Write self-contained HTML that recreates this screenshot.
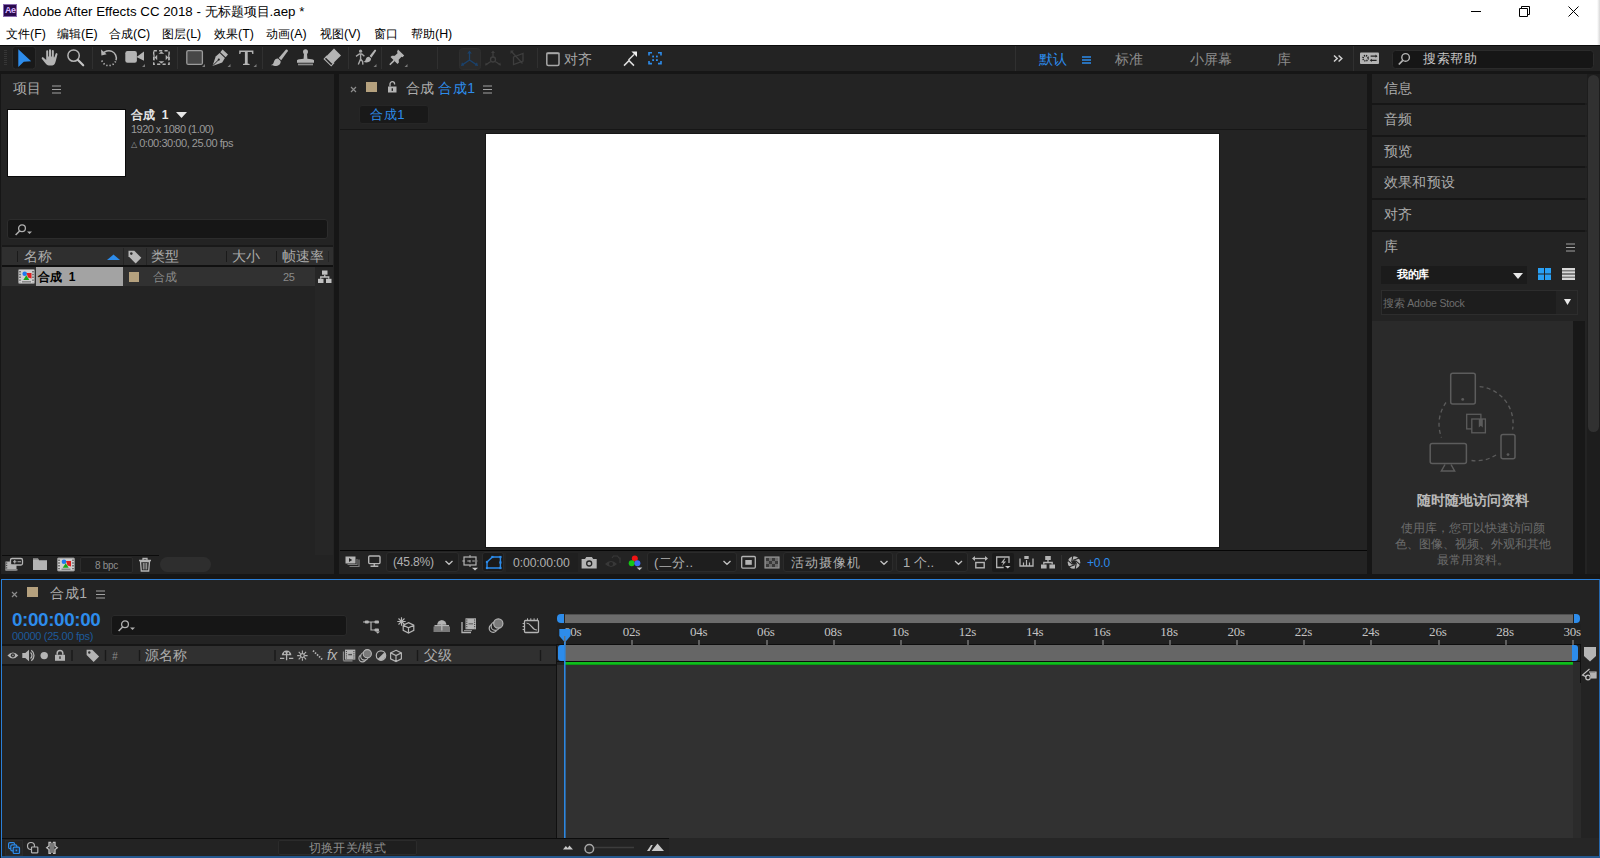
<!DOCTYPE html>
<html><head><meta charset="utf-8"><title>Adobe After Effects CC 2018</title>
<style>
*{box-sizing:border-box;margin:0;padding:0}
html,body{width:1600px;height:858px;overflow:hidden;background:#161616;font-family:"Liberation Sans",sans-serif;}
.a{position:absolute}
.t{position:absolute;white-space:nowrap;line-height:1}
svg{position:absolute;overflow:visible}
/* title + menu */
#title{left:0;top:0;width:1600px;height:45px;background:#fff}
#title .tt{left:23px;top:5px;font-size:13.3px;color:#000}
.menu{top:28px;font-size:12.400px;color:#000}
/* toolbar */
#tool{left:0;top:45px;width:1600px;height:26px;background:#232323;border-top:1px solid #0c0c0c}
.vd{position:absolute;width:1px;background:#333;top:4px;height:20px}
.pn{position:absolute;background:#232323}
.rl{top:625px;font-family:"Liberation Serif",serif;font-size:13px;color:#c4c4c4;letter-spacing:-.2px}
.bx{background:#1e1e1e;border:1px solid #2b2b2b;border-radius:3px}
.ft{font-size:12.400px;color:#b0b0b0;letter-spacing:-.2px}
.lbl{color:#acacac;font-size:14px;letter-spacing:.2px;margin-top:-1.5px}
</style></head><body>
<!-- TITLE BAR -->
<div id="title" class="a">
  <div class="a" style="left:3px;top:4px;width:14px;height:13px;background:#2a0a4e;border:1px solid #8a6bb0"></div>
  <div class="t" style="left:5px;top:6px;font-size:9px;font-weight:bold;color:#d9b8ff;letter-spacing:-0.5px">Ae</div>
  <div class="t tt">Adobe After Effects CC 2018 - 无标题项目.aep *</div>
  <div class="t menu" style="left:6px">文件(F)</div>
  <div class="t menu" style="left:57px">编辑(E)</div>
  <div class="t menu" style="left:109px">合成(C)</div>
  <div class="t menu" style="left:162px">图层(L)</div>
  <div class="t menu" style="left:214px">效果(T)</div>
  <div class="t menu" style="left:266px">动画(A)</div>
  <div class="t menu" style="left:320px">视图(V)</div>
  <div class="t menu" style="left:374px">窗口</div>
  <div class="t menu" style="left:411px">帮助(H)</div>
  <div class="a" style="left:1597px;top:0;width:3px;height:45px;background:linear-gradient(90deg,#fff,#d8d8d8)"></div>
  <svg style="left:1465px;top:0" width="135" height="22" viewBox="0 0 135 22"><path d="M6 11.5h10" stroke="#000" stroke-width="1" fill="none"/><path d="M54.5 8.5h8v8h-8zM56.5 8.5v-2h8v8h-2" stroke="#000" stroke-width="1" fill="none"/><path d="M103.5 6.5l10 10M113.5 6.5l-10 10" stroke="#000" stroke-width="1" fill="none"/></svg>
</div>
<!-- TOOLBAR -->
<div id="tool" class="a">
<svg style="left:0;top:-1px" width="1600" height="28" viewBox="0 45 1600 28" fill="none">
  <!-- grip -->
  <path d="M4 50.5h3M4 52.5h3M4 54.5h3M4 56.5h3M4 58.5h3M4 60.5h3M4 62.5h3M4 64.5h3" stroke="#363636" stroke-width="1"/>
  <!-- select tool -->
  <rect x="12.5" y="46.5" width="23" height="22.5" rx="3" fill="#191919" stroke="#2b2b2b"/>
  <path d="M18.3 49.3L31.2 61.2L23.8 61.8L18.3 67z" fill="#2d8ceb"/>
  <!-- hand -->
  <g fill="#b4b4b4"><path d="M46.2 57V51.3a1 1 0 0 1 2 0V56.5h.8V50.2a1 1 0 0 1 2 0V56.5h.8V51a1 1 0 0 1 2 0V57.3h.6l1.2-3.6a1 1 0 0 1 1.9.5l-1.6 6.3c-.5 2.4-1.6 5-3.6 5h-3.4c-1.6 0-2.6-1-3.5-2.2l-3.6-4.6a1.05 1.05 0 0 1 1.6-1.3l2.8 2.6z"/></g>
  <!-- zoom -->
  <circle cx="73.6" cy="55.6" r="5.7" stroke="#b4b4b4" stroke-width="1.5"/><path d="M78 60l5.2 5.3" stroke="#c4c4c4" stroke-width="2.2" stroke-linecap="round"/>
  <path d="M92.5 47v22M177.5 47v22M262.5 47v22M348.5 47v22M381.5 47v22M437.5 47v22M537.5 48v20M1015.5 46v25M1353.5 46v25" stroke="#303030"/>
  <!-- rotate -->
  <path d="M102.6 54.3A7.4 7.4 0 0 1 116 60.3" stroke="#b4b4b4" stroke-width="1.5"/>
  <path d="M101 49.6l.4 5.9 5.3-1.2z" fill="#b4b4b4"/>
  <path d="M115.6 61.3A7.4 7.4 0 0 1 101.6 59.5" stroke="#b4b4b4" stroke-width="1.6" stroke-dasharray="1.3 1.9"/>
  <!-- camera -->
  <rect x="125.3" y="51" width="11.6" height="11.8" rx="2.2" fill="#b4b4b4"/><path d="M136.5 57l7.5-5.6v9.3z" fill="#b4b4b4"/>
  <path d="M145 64v3h-3z M205 64v3h-3z M230.500 64v3h-3z M256.500 64v3h-3z M376.500 64v3h-3z M407.500 64v3h-3z" fill="#7a7a7a"/>
  <!-- pan behind -->
  <rect x="153.7" y="50.7" width="15.4" height="13.6" stroke="#b4b4b4" stroke-width="1.4" stroke-dasharray="3.2 2.2"/>
  <path d="M158.500 53.800h5.800l-2.900-2.200z M158.500 61.200h5.800l-2.900 2.200z M157.200 54.800v5.400l-2.600-2.700z M165.700 54.800v5.400l2.600-2.700z" fill="#b4b4b4"/>
  <path d="M154 54.500v6M168.800 54.500v6" stroke="#b4b4b4" stroke-width="1.2"/>
  <!-- rect tool -->
  <rect x="186.800" y="50.600" width="15.600" height="13.800" rx="1.500" fill="#474747" stroke="#9c9c9c" stroke-width="1.300"/>
  <!-- pen -->
  <path d="M222.600 49.600l5.400 5-2.300 2.600-5.400-5z" fill="#b4b4b4"/>
  <path d="M219.600 53l5.300 5-2.700 4.400-9.700 3.600 3.200-9.400z" fill="#b4b4b4"/>
  <path d="M212.800 65.600l5.600-5.600" stroke="#232323" stroke-width="1"/>
  <circle cx="218.800" cy="59.600" r="1.100" fill="#232323"/>
  <!-- T -->
  <path d="M239.200 50.500h14.200v3.600h-1.100l-.6-2h-4v11.400l1.900.4v1h-6.600v-1l1.900-.4V52.100h-4l-.6 2h-1.100z" fill="#b4b4b4"/>
  <!-- brush -->
  <path d="M286 49.600c1.200-.6 2.300.4 1.700 1.600l-6.500 9-2.500-2.300z" fill="#b4b4b4"/>
  <path d="M278 58.600l2.600 2.400c.5 3-2 5-5.600 5-1.800 0-3.200-.4-4-.9 2.200-.5 2.400-2 3-3.600.6-1.800 2-3 4-2.900z" fill="#b4b4b4"/>
  <!-- stamp -->
  <circle cx="305.500" cy="51.700" r="2.500" fill="#b4b4b4"/>
  <path d="M304 53.500h3l.4 5.300c3 .2 5.600.6 6.600 1.400v2.500h-17v-2.500c1-.8 3.600-1.200 6.600-1.400z" fill="#b4b4b4"/>
  <path d="M298 63.600h15v1.700h-15z" fill="#8c8c8c"/>
  <!-- eraser -->
  <path d="M334 48.600l7 6.800-8.600 8.700-7-6.800z" fill="#b4b4b4"/>
  <path d="M326.800 56.200l-2.600 2.700 7 6.900 2.600-2.700z" stroke="#b4b4b4" stroke-width="1.100"/>
  <!-- roto brush -->
  <circle cx="360.600" cy="51.200" r="1.600" fill="#a8a8a8"/>
  <path d="M356 56.300l3.400-2.300h2.400l2.600 2.300M360.600 54v5l-2.300 5.600M360.600 59l2 2.600.3 3" stroke="#a8a8a8" stroke-width="1.400"/>
  <path d="M374.600 49.800c1-.5 1.900.3 1.400 1.300l-4.600 6.600-1.800-1.600z" fill="#b4b4b4"/>
  <path d="M369 56.800l2 1.800c.3 2.300-1.600 3.800-4.400 3.800-1.400 0-2.400-.3-3-.7 1.700-.4 1.800-1.500 2.300-2.700.5-1.400 1.600-2.300 3.100-2.200z" fill="#b4b4b4"/>
  <!-- pin -->
  <path d="M398 49.600l6.200 6-1.700 1.700-1-.6-2.800 3 .2 2.800-1.400 1.400-7-6.800 1.400-1.400 2.900.1 2.900-2.800-.7-1z" fill="#b4b4b4"/>
  <path d="M394.200 60.400l-4.400 4.300" stroke="#b4b4b4" stroke-width="1.600"/>
  <!-- axis modes -->
  <rect x="459.500" y="48.500" width="21" height="21" rx="3" fill="#2a2a2a" stroke="#2e2e2e"/>
  <g stroke="#1b426c" stroke-width="1.300"><path d="M469.500 60V52.500M469.500 60l-6.800 4.600M469.500 60l6.800 4.600"/></g>
  <path d="M469.500 50.600l2.300 3h-4.600z M461 65.900l1-3.600 2.300 3.200z M478 65.900l-1-3.600-2.300 3.200z" fill="#1b426c"/>
  <g stroke="#3e3e3e" stroke-width="1.300"><path d="M493 57V52M490.800 61.500l-4.600 3M495.200 61.500l4.600 3"/><circle cx="493" cy="59.500" r="2.500"/></g>
  <path d="M493 50.400l2 2.600h-4z M485 65.500l.8-3 2 2.600z M501 65.500l-.8-3-2 2.600z" fill="#3e3e3e"/>
  <g stroke="#3e3e3e" stroke-width="1.300"><path d="M513.500 57l9.500-3.500v7.500l-9.500 3.500zM511.500 51.500l11 12"/></g>
  <path d="M510.500 50.500h3.400l-3.400 3.400z" fill="#3e3e3e"/>
  <!-- snap checkbox -->
  <rect x="546.800" y="53" width="12.200" height="12.600" rx="1.500" stroke="#a8a8a8" stroke-width="1.500"/>
  <path d="M546.500 53.400h13" stroke="#a8a8a8" stroke-width="1.600"/>
  <!-- snap options -->
  <path d="M624 65.600l5-5 5 5" stroke="#dcdcdc" stroke-width="1.500"/>
  <path d="M628.500 60l5.500-5.500" stroke="#dcdcdc" stroke-width="1.500"/>
  <path d="M637 51.500v5.600l-5.600-5.600z" fill="#f0f0f0"/>
  <g stroke="#2d8ceb" stroke-width="1.600"><path d="M649 55.400v-2.600h3M658 52.800h3v2.600M661 61v2.600h-3M652 63.600h-3v-2.600"/></g>
  <g fill="#2d8ceb"><rect x="652.200" y="55.600" width="1.800" height="1.800"/><rect x="656" y="55.600" width="1.800" height="1.800"/><rect x="652.200" y="59.200" width="1.800" height="1.800"/><rect x="656" y="59.200" width="1.800" height="1.800"/></g>
  <!-- workspace menu -->
  <path d="M1082 57h9M1082 60h9M1082 63h9" stroke="#2d8ceb" stroke-width="1.300"/>
  <path d="M1334 55.500l3.200 3-3.200 3M1338.600 55.500l3.200 3-3.200 3" stroke="#d0d0d0" stroke-width="1.500"/>
  <!-- sync settings icon -->
  <rect x="1360" y="52.500" width="19" height="11.500" rx="1" fill="#b4b4b4"/>
  <circle cx="1365.600" cy="58.200" r="2.600" stroke="#232323" stroke-width="1.600" stroke-dasharray="1.200 .850"/>
  <path d="M1370.600 56.200h5.600M1376.600 60.300h-5.600" stroke="#232323" stroke-width="1.200"/><path d="M1375.500 54.600l2 1.600-2 1.600zM1371.800 58.700l-2 1.600 2 1.600z" fill="#232323"/>
  <!-- search -->
  <rect x="1392.500" y="50.500" width="201" height="18" rx="3" fill="#161616" stroke="#2b2b2b"/>
  <circle cx="1405.600" cy="57.400" r="3.800" stroke="#b4b4b4" stroke-width="1.400"/><path d="M1402.800 60.300l-4 4.200" stroke="#b4b4b4" stroke-width="1.700"/>
</svg>
  <div class="t lbl" style="left:564px;top:7px;color:#a8a8a8">对齐</div>
  <div class="t lbl" style="left:1039px;top:7px;color:#2d8ceb">默认</div>
  <div class="t lbl" style="left:1115px;top:7px;color:#8c8c8c">标准</div>
  <div class="t lbl" style="left:1190px;top:7px;color:#8c8c8c">小屏幕</div>
  <div class="t lbl" style="left:1277px;top:7px;color:#8c8c8c">库</div>
  <div class="t" style="left:1423px;top:7px;color:#c8c8c8;font-size:12.500px;letter-spacing:.5px">搜索帮助</div>
</div>
<!-- PROJECT PANEL -->
<div id="proj" class="pn" style="left:1px;top:74px;width:333px;height:500px">
  <!-- coords relative: x-1, y-74 -->
  <div class="t lbl" style="left:12px;top:8px">项目</div>
  <svg style="left:51px;top:11px" width="9" height="9" viewBox="0 0 9 9"><path d="M0 1h9M0 4.5h9M0 8h9" stroke="#a2a2a2" stroke-width="1.2"/></svg>
  <div class="a" style="left:6px;top:35px;width:119px;height:68px;background:#fff;border:1px solid #0a0a0a"></div>
  <div class="t" style="left:130px;top:35px;font-size:12px;font-weight:bold;color:#e6e6e6;letter-spacing:0">合成&nbsp;&nbsp;1</div>
  <svg style="left:175px;top:38px" width="11" height="6" viewBox="0 0 11 6"><path d="M0 0h11L5.5 6z" fill="#e6e6e6"/></svg>
  <div class="t" style="left:130px;top:50px;font-size:11px;color:#9a9a9a;letter-spacing:-.55px">1920 x 1080 (1.00)</div>
  <div class="t" style="left:130px;top:64px;font-size:11px;color:#9a9a9a;letter-spacing:-.45px"><span style="font-size:8px">△</span> 0:00:30:00, 25.00 fps</div>
  <!-- search -->
  <div class="a" style="left:6px;top:145px;width:321px;height:20px;background:#161616;border:1px solid #2c2c2c;border-radius:3px"></div>
  <svg style="left:14px;top:150px" width="18" height="12" viewBox="0 0 18 12"><circle cx="7" cy="4.3" r="3.4" stroke="#b0b0b0" stroke-width="1.3" fill="none"/><path d="M4.6 6.9L0.6 11" stroke="#b0b0b0" stroke-width="1.5"/><path d="M12 7.5h5l-2.5 2.5z" fill="#b0b0b0"/></svg>
  <!-- header row -->
  <div class="a" style="left:1px;top:171px;width:331px;height:2px;background:#191919"></div>
  <div class="a" style="left:1px;top:173px;width:331px;height:18px;background:#2f2f2f"></div>
  <div class="a" style="left:1px;top:191px;width:331px;height:2px;background:#101010"></div>
  <div class="a" style="left:16px;top:177px;width:1px;height:11px;background:#1a1a1a"></div>
  <div class="a" style="left:122px;top:174px;width:1px;height:17px;background:#242424"></div>
  <div class="a" style="left:145px;top:174px;width:1px;height:17px;background:#242424"></div>
  <div class="a" style="left:225px;top:177px;width:1px;height:11px;background:#1a1a1a"></div>
  <div class="a" style="left:275px;top:177px;width:1px;height:11px;background:#1a1a1a"></div>
  <div class="a" style="left:327px;top:177px;width:1px;height:11px;background:#242424"></div>
  <div class="t lbl" style="left:23px;top:176px">名称</div>
  <svg style="left:106px;top:180px" width="13" height="6" viewBox="0 0 13 6"><path d="M0 6L6.5 0.5 13 6z" fill="#2d8ceb"/></svg>
  <svg style="left:127px;top:176px" width="14" height="14" viewBox="0 0 14 14"><path d="M0.5 0.8h5.8l7 7-5.6 5.6-7.2-7.2z" fill="#b8b8b8"/><circle cx="3.3" cy="3.6" r="1.3" fill="#2f2f2f"/></svg>
  <div class="t lbl" style="left:150px;top:176px">类型</div>
  <div class="t lbl" style="left:231px;top:176px">大小</div>
  <div class="t lbl" style="left:281px;top:176px">帧速率</div>
  <div class="a" style="left:314px;top:193px;width:18px;height:288px;background:#262626"></div>
  <!-- row -->
  <div class="a" style="left:1px;top:193px;width:313px;height:19px;background:#313131"></div>
  <div class="a" style="left:35px;top:193px;width:87px;height:19px;background:#a3a3a3"></div>
  <div class="t" style="left:37px;top:197px;font-size:12px;color:#000;font-weight:bold;letter-spacing:0">合成&nbsp;&nbsp;1</div>
  <div class="a" style="left:128px;top:198px;width:10px;height:10px;background:#b5a17e"></div>
  <div class="t" style="left:152px;top:197px;font-size:12px;color:#8a8a8a">合成</div>
  <div class="t" style="left:282px;top:198px;font-size:11px;color:#8a8a8a;letter-spacing:-.3px">25</div>
  <!-- footer -->
  <div class="a" style="left:1px;top:481px;width:157px;height:1px;background:#0c0c0c"></div>
  <div class="a" style="left:79px;top:483px;width:53px;height:16px;background:#1e1e1e;border:1px solid #2c2c2c;border-radius:2px"></div>
  <div class="t" style="left:94px;top:487px;font-size:10px;color:#8e8e8e;letter-spacing:-.3px">8 bpc</div>
  <div class="a" style="left:159px;top:483px;width:51px;height:15px;background:#2e2e2e;border-radius:8px"></div>
</div>
<!-- COMP PANEL -->
<div id="comp" class="pn" style="left:339px;top:74px;width:1028px;height:500px">
  <!-- tab header (coords relative to panel: x-339, y-74) -->
  <svg style="left:12px;top:13px" width="5" height="5" viewBox="0 0 5 5"><path d="M0 0l5 5M5 0l-5 5" stroke="#8c8c8c" stroke-width="1.200" fill="none"/></svg>
  <div class="a" style="left:27px;top:8px;width:11px;height:10px;background:#b5a17e"></div>
  <svg style="left:49px;top:7px" width="9" height="12" viewBox="0 0 9 12"><path d="M0 5.5h8.5v6H0z" fill="#b4b4b4"/><path d="M2 5.5V3a2.3 2.3 0 0 1 4.6 0v0.6" stroke="#b4b4b4" stroke-width="1.3" fill="none"/><rect x="3.6" y="7.3" width="1.4" height="2.6" fill="#232323"/></svg>
  <div class="t lbl" style="left:67px;top:8px">合成</div>
  <div class="t lbl" style="left:99px;top:8px;color:#2d8ceb;letter-spacing:.6px">合成1</div>
  <svg style="left:144px;top:11px" width="9" height="9" viewBox="0 0 9 9"><path d="M0 1h9M0 4.5h9M0 8h9" stroke="#a2a2a2" stroke-width="1.2"/></svg>
  <div class="a" style="left:20px;top:31px;width:70px;height:19px;background:#191919;border:1px solid #262626;border-radius:3px"></div>
  <div class="t" style="left:31px;top:34px;font-size:13px;color:#2d8ceb;letter-spacing:.6px">合成1</div>
  <div class="a" style="left:1px;top:55px;width:1027px;height:1px;background:#161616"></div>
  <!-- canvas -->
  <div class="a" style="left:147px;top:60px;width:733px;height:413px;background:#fff;box-shadow:0 0 0 1px #171717"></div>
  <div class="a" style="left:1px;top:476px;width:1027px;height:1px;background:#060606"></div>
  <!-- viewer footer -->
  <div id="vf" class="a" style="left:0;top:477px;width:1028px;height:23px"></div>
</div>
<!-- VIEWER FOOTER (page coords) -->
<div class="a bx" style="left:386px;top:552px;width:73px;height:20px"></div>
<div class="a bx" style="left:482px;top:552px;width:22px;height:20px;background:#1a1a1a"></div>
<div class="a" style="left:506px;top:553px;width:72px;height:19px;background:#1f1f1f"></div>
<div class="a bx" style="left:647px;top:552px;width:90px;height:20px"></div>
<div class="a bx" style="left:783px;top:552px;width:110px;height:20px"></div>
<div class="a bx" style="left:896px;top:552px;width:72px;height:20px"></div>
<div class="a" style="left:992px;top:553px;width:22px;height:19px;background:#1a1a1a;border-radius:2px"></div>
<div class="t ft" style="left:393px;top:556px;font-size:12.100px">(45.8%)</div>
<div class="t ft" style="left:513px;top:557px;font-size:12.200px;letter-spacing:-.1px">0:00:00:00</div>
<div class="t ft" style="left:654px;top:556px;font-size:13px;letter-spacing:.4px">(二分..</div>
<div class="t ft" style="left:791px;top:556px;font-size:13px;letter-spacing:.9px">活动摄像机</div>
<div class="t ft" style="left:903px;top:556px;font-size:13px;letter-spacing:0">1 个..</div>
<div class="t ft" style="left:1087px;top:557px;color:#2d8ceb;font-size:12px">+0.0</div>
<svg style="left:0;top:0" width="1600" height="858" viewBox="0 0 1600 858" fill="none">
  <!-- always preview -->
  <path d="M349.500 566.500h9.500v-7M347.500 564.500h9.500v-5.500" stroke="#7a7a7a" stroke-width="1.200"/>
  <rect x="345.500" y="556.500" width="10" height="7" fill="#b4b4b4"/><path d="M349 558l3.200 2-3.200 2z" fill="#232323"/>
  <!-- monitor -->
  <rect x="368.700" y="556" width="11.300" height="7.600" rx="1" stroke="#b4b4b4" stroke-width="1.400"/><path d="M374.300 563.600v2M370.500 566.300h7.800" stroke="#b4b4b4" stroke-width="1.500"/>
  <!-- chevrons -->
  <path d="M445.500 561l3.500 3.300 3.500-3.300M723.500 561l3.500 3.300 3.500-3.300M880.500 561l3.500 3.300 3.500-3.300M955 561l3.500 3.300 3.500-3.300" stroke="#c0c0c0" stroke-width="1.300"/>
  <!-- ROI -->
  <rect x="464" y="557" width="12" height="8" stroke="#b4b4b4" stroke-width="1.200"/><path d="M470 555v12M462.300 561h15.400" stroke="#b4b4b4" stroke-width="1" stroke-dasharray="2.500 2.500"/>
  <path d="M472 567.800h6l-3 2.700z" fill="#c8c8c8"/>
  <!-- mask -->
  <path d="M492.400 557h8v11h-13.400v-6z" stroke="#2d8ceb" stroke-width="1.400"/>
  <g fill="#2d8ceb"><rect x="491.300" y="555.900" width="2.200" height="2.200"/><rect x="499.300" y="555.900" width="2.200" height="2.200"/><rect x="499.300" y="566.900" width="2.200" height="2.200"/><rect x="485.900" y="566.900" width="2.200" height="2.200"/><rect x="485.900" y="560.900" width="2.200" height="2.200"/><rect x="499.300" y="561.400" width="2.200" height="2.200"/></g>
  <!-- camera -->
  <path d="M581.600 559h3.400l1.300-2h5.600l1.300 2h3.500v9.500h-15.100z" fill="#b4b4b4"/><circle cx="589.200" cy="563.500" r="2.500" stroke="#232323" stroke-width="1.300"/>
  <!-- show snapshot (dim) -->
  <path d="M605 564q6-6 12 0q-6 6-12 0z" fill="#383838"/><circle cx="611" cy="564" r="2" fill="#232323"/><path d="M612 558l1.500-2h4l1.500 2h1v5" stroke="#383838" stroke-width="1.200"/>
  <!-- rgb -->
  <circle cx="634.800" cy="558.400" r="3" fill="#f01414"/><circle cx="631.700" cy="563.300" r="3" fill="#14c814"/><circle cx="637.400" cy="563.300" r="3" fill="#3c6cf0"/>
  <path d="M636.700 567.600h5.600l-2.800 2.600z" fill="#c8c8c8"/>
  <!-- fast preview region icon -->
  <rect x="741.700" y="556.500" width="13.600" height="11.600" rx="1" stroke="#b4b4b4" stroke-width="1.300"/><rect x="745.300" y="560" width="6.500" height="4.800" fill="#b4b4b4"/>
  <!-- transparency grid -->
  <rect x="765" y="557" width="14" height="11" fill="#6a6a6a" stroke="#9a9a9a" stroke-width="1.100"/>
  <path d="M766 558h3v3h-3zM772 558h3v3h-3zM769 561h3v3h-3zM775 561h3v3h-3zM766 564h3v3h-3zM772 564h3v3h-3z" fill="#3a3a3a"/>
  <!-- pixel aspect -->
  <path d="M973.500 558.500h13.500" stroke="#b4b4b4" stroke-width="1.300"/><path d="M972 558.500l3-2.500v5zM988 558.500l-3-2.500v5z" fill="#b4b4b4"/><rect x="975.800" y="562.500" width="8.400" height="5.300" stroke="#b4b4b4" stroke-width="1.400"/>
  <!-- fast previews -->
  <path d="M1009 563v-6h-12.300v10.500h7" stroke="#b4b4b4" stroke-width="1.300"/><path d="M1004.300 558.500l-3.300 4.300h2.400l-1.600 3.500 4.300-4.800h-2.500l1.800-3z" fill="#b4b4b4"/><path d="M1005 566h5.500l-2.750 2.600z" fill="#c8c8c8"/>
  <!-- timeline btn -->
  <path d="M1020 558.500v7.500h13v-7.500" stroke="#b4b4b4" stroke-width="1.300"/><path d="M1023.500 566v-3.500M1026.500 566v-6M1029.500 566v-3.500" stroke="#b4b4b4" stroke-width="1.200"/><rect x="1024.300" y="556" width="4.400" height="3" fill="#b4b4b4"/>
  <!-- flowchart -->
  <rect x="1045.200" y="556" width="5.600" height="4" fill="#b4b4b4"/><rect x="1041" y="564.500" width="5.600" height="4" fill="#b4b4b4"/><rect x="1049.400" y="564.500" width="5.600" height="4" fill="#b4b4b4"/><path d="M1048 560v2.500M1043.800 564.500v-2h8.400v2" stroke="#b4b4b4" stroke-width="1.300"/>
  <path d="M1061.500 555v15" stroke="#303030"/>
  <!-- aperture -->
  <circle cx="1074" cy="562.5" r="6.300" fill="#b4b4b4"/><path d="M1076.3 562.9L1075.2 569.2M1074.8 564.7L1068.8 566.9M1072.5 564.3L1067.6 560.2M1071.7 562.1L1072.8 555.8M1073.2 560.3L1079.2 558.1M1075.5 560.7L1080.4 564.8" stroke="#232323" stroke-width="1.100"/><circle cx="1074" cy="562.5" r="2.200" fill="#232323"/>
</svg>
<!-- RIGHT PANELS -->
<div id="right" class="a" style="left:1372px;top:74px;width:228px;height:500px">
  <div class="a" style="left:213px;top:0;width:15px;height:500px;background:#1d1d1d"></div>
  <div class="pn" style="left:0;top:0px;width:215px;height:29px"><div class="t lbl" style="left:12px;top:8px">信息</div></div>
  <div class="pn" style="left:0;top:31px;width:215px;height:30px"><div class="t lbl" style="left:12px;top:8px">音频</div></div>
  <div class="pn" style="left:0;top:63px;width:215px;height:29px"><div class="t lbl" style="left:12px;top:8px">预览</div></div>
  <div class="pn" style="left:0;top:94px;width:215px;height:30px"><div class="t lbl" style="left:12px;top:8px">效果和预设</div></div>
  <div class="pn" style="left:0;top:126px;width:215px;height:30px"><div class="t lbl" style="left:12px;top:8px">对齐</div></div>
  <!-- library panel: y 232..574 -->
  <div class="pn" style="left:0;top:158px;width:215px;height:342px">
    <div class="t lbl" style="left:12px;top:8px">库</div>
    <svg style="left:194px;top:11px" width="9" height="9" viewBox="0 0 9 9"><path d="M0 1h9M0 4.500h9M0 8h9" stroke="#a2a2a2" stroke-width="1.200"/></svg>
    <div class="a" style="left:9px;top:34px;width:146px;height:18px;background:#1b1b1b"></div>
    <div class="t" style="left:25px;top:37px;font-size:11px;font-weight:bold;color:#fff;letter-spacing:-.5px">我的库</div>
    <svg style="left:141px;top:41px" width="10" height="6" viewBox="0 0 10 6"><path d="M0 0h10L5 6z" fill="#e8e8e8"/></svg>
    <svg style="left:166px;top:36px" width="13" height="12" viewBox="0 0 13 12"><path d="M0 0h6v5.500H0zM7 0h6v5.500H7zM0 6.500h6V12H0zM7 6.500h6V12H7z" fill="#29a0f5"/></svg>
    <svg style="left:190px;top:36px" width="13" height="12" viewBox="0 0 13 12"><path d="M0 0h13v2.400H0zM0 3.200h13v2.400H0zM0 6.400h13v2.400H0zM0 9.600h13V12H0z" fill="#d8d8d8"/></svg>
    <div class="a" style="left:9px;top:58px;width:197px;height:25px;background:#1d1d1d;border:1px solid #2d2d2d"></div>
    <div class="a" style="left:184px;top:59px;width:21px;height:23px;background:#232323"></div>
    <div class="t" style="left:11px;top:66px;font-size:10.500px;color:#6e6e6e;letter-spacing:-.2px">搜索 Adobe Stock</div>
    <svg style="left:192px;top:67px" width="7" height="6" viewBox="0 0 7 6"><path d="M0 0h7L3.500 6z" fill="#e8e8e8"/></svg>
    <!-- body -->
    <div class="a" style="left:0;top:89px;width:201px;height:253px;background:#2a2a2a"></div>
    <div class="a" style="left:201px;top:89px;width:12px;height:253px;background:#181818"></div>
    <div class="t" style="left:0;top:261px;width:201px;text-align:center;font-size:14px;font-weight:bold;color:#b9b9b9">随时随地访问资料</div>
    <div class="t" style="left:0;top:288px;width:201px;text-align:center;font-size:12px;color:#6c6c6c;line-height:16px">使用库，您可以快速访问颜<br>色、图像、视频、外观和其他<br>最常用资料。</div>
  </div>
  <!-- outer scrollbar -->
  <div class="a" style="left:216px;top:1px;width:11px;height:357px;background:#313131;border-radius:6px"></div>
</div>
<!-- LIBRARY ILLUSTRATION + PROJECT ICONS (page coords) -->
<svg style="left:0;top:0" width="1600" height="858" viewBox="0 0 1600 858" fill="none">
  <g stroke="#5c5c5c" stroke-width="1.500">
    <rect x="1450.700" y="373.300" width="24.600" height="30.600" rx="2"/>
    <rect x="1501" y="434.400" width="14" height="24.400" rx="2"/>
    <rect x="1430.200" y="443.400" width="36.200" height="20" rx="2"/>
    <path d="M1445 464.500l-3.600 6.500h13.200l-3.600-6.500"/>
    <rect x="1466.700" y="414.300" width="14.200" height="14.600" stroke-width="1.300"/>
    <rect x="1471.800" y="419" width="13.600" height="13.800" fill="#2a2a2a" stroke-width="1.300"/>
    <path d="M1479.600 386.600A37 37 0 0 1 1512.600 429.500" stroke-dasharray="4 3.200" stroke-width="1.300"/>
    <path d="M1446 402.500A37 37 0 0 0 1441.500 437.500" stroke-dasharray="4 3.200" stroke-width="1.300"/>
    <path d="M1471.500 460.500A37 37 0 0 0 1497.500 454" stroke-dasharray="4 3.200" stroke-width="1.300"/>
  </g>
  <path d="M1478.800 419h4v8.600l-2-1.800-2 1.800z" fill="#5c5c5c"/>
  <circle cx="1462.700" cy="399.400" r="1.400" fill="#5c5c5c"/><circle cx="1508" cy="454.600" r="1.400" fill="#5c5c5c"/>
  <!-- project row comp icon -->
  <rect x="18.500" y="269.500" width="16" height="14" rx="1" fill="#cfcfcf" stroke="#8a8a8a"/>
  <path d="M20 271v11.500M33 271v11.500" stroke="#555" stroke-width="1.400" stroke-dasharray="1.400 1.400"/>
  <rect x="22" y="281" width="9" height="1.600" fill="#888"/>
  <circle cx="24.700" cy="273.700" r="2.300" fill="#1e78f0"/><path d="M26.500 273h5v5.500l-3.500-1z" fill="#e02020"/><path d="M26.300 275.300l3 4.700h-6z" fill="#18a818"/>
  <!-- project flowchart icon -->
  <rect x="322" y="270.500" width="5.500" height="4.200" fill="#c0c0c0"/><rect x="318" y="278.800" width="5.500" height="4.200" fill="#c0c0c0"/><rect x="326" y="278.800" width="5.500" height="4.200" fill="#c0c0c0"/><path d="M324.750 274.700v2.300M320.750 278.800v-1.800h8v1.800" stroke="#c0c0c0" stroke-width="1.300"/>
  <!-- project footer: interpret footage -->
  <rect x="5.500" y="561.500" width="11" height="9" fill="#b4b4b4"/><path d="M6.700 562.500v7.500" stroke="#232323" stroke-width=".9" stroke-dasharray="1.200 1.200"/><path d="M5.500 569.800h12" stroke="#8a8a8a" stroke-width="1.600"/>
  <rect x="10.500" y="558.500" width="12" height="6.500" rx="1.500" fill="#232323" stroke="#b4b4b4" stroke-width="1.300"/><path d="M13 561.800h3.500M14.750 560v3.600M17.500 561.800h3.500" stroke="#b4b4b4" stroke-width="1.100"/>
  <!-- folder -->
  <path d="M33 558.500h5l1 1.800h8v9.700h-14z" fill="#b4b4b4"/><path d="M33 558.500h5l.7 1.300h-5.700z" fill="#8a8a8a"/>
  <!-- new comp -->
  <rect x="57.500" y="558" width="17" height="13" rx="1" fill="#cfcfcf" stroke="#8a8a8a"/>
  <path d="M59 559.500v10.500M73 559.500v10.500" stroke="#555" stroke-width="1.400" stroke-dasharray="1.400 1.400"/>
  <rect x="61.500" y="568.500" width="9" height="1.500" fill="#888"/>
  <circle cx="64" cy="561.800" r="2.300" fill="#1e78f0"/><path d="M66 561h5v5.500l-3.500-1z" fill="#e02020"/><path d="M65.700 563.300l3 4.500h-6z" fill="#18a818"/>
  <!-- trash -->
  <path d="M140.500 561.500h9l-.8 9.500h-7.400z" stroke="#b4b4b4" stroke-width="1.300"/><path d="M139 560.500h12M143 560v-1.500h4v1.500" stroke="#b4b4b4" stroke-width="1.300"/><path d="M143.300 563v6.500M145 563v6.500M146.700 563v6.500" stroke="#b4b4b4" stroke-width=".9"/>
</svg>
<!-- TIMELINE -->
<div id="tl" class="pn" style="left:1px;top:579px;width:1599px;height:279px;border:1px solid #2a7fd8;border-right-color:#2567ad;border-bottom:2px solid #24588f">
<div class="a" id="tli" style="left:-2px;top:-580px;width:1600px;height:858px">
  <!-- tab -->
  <svg style="left:12px;top:592px" width="5" height="5" viewBox="0 0 5 5"><path d="M0 0l5 5M5 0l-5 5" stroke="#8c8c8c" stroke-width="1.200" fill="none"/></svg>
  <div class="a" style="left:27px;top:587px;width:11px;height:10px;background:#b5a17e"></div>
  <div class="t lbl" style="left:50px;top:587px;letter-spacing:.6px">合成1</div>
  <svg style="left:96px;top:590px" width="9" height="9" viewBox="0 0 9 9"><path d="M0 1h9M0 4.500h9M0 8h9" stroke="#a2a2a2" stroke-width="1.200"/></svg>
  <!-- timecode -->
  <div class="t" style="left:12px;top:611px;font-size:18.800px;font-weight:bold;color:#2d8ceb;letter-spacing:-.35px">0:00:00:00</div>
  <div class="t" style="left:12px;top:631px;font-size:11px;color:#1d5a9a;letter-spacing:-.3px">00000 (25.00 fps)</div>
  <div class="a" style="left:111px;top:615px;width:236px;height:21px;background:#161616;border:1px solid #2a2a2a;border-radius:3px"></div>
  <svg style="left:118px;top:620px" width="18" height="12" viewBox="0 0 18 12"><circle cx="7" cy="4.300" r="3.400" stroke="#b0b0b0" stroke-width="1.300" fill="none"/><path d="M4.600 6.900L.6 11" stroke="#b0b0b0" stroke-width="1.500"/><path d="M12 7.500h5l-2.500 2.500z" fill="#b0b0b0"/></svg>
  <!-- column header -->
  <div class="a" style="left:2px;top:644px;width:555px;height:2px;background:#161616"></div>
  <div class="a" style="left:2px;top:646px;width:554px;height:18px;background:#303030"></div>
  <div class="a" style="left:2px;top:664px;width:555px;height:2px;background:#161616"></div>
  <div class="t lbl" style="left:145px;top:649px">源名称</div>
  <div class="t" style="left:327px;top:648px;font-size:14px;font-style:italic;color:#b4b4b4;letter-spacing:-.6px">fx</div>
  <div class="t lbl" style="left:424px;top:649px">父级</div>
  <div class="t" style="left:112px;top:652px;font-size:10px;font-style:italic;color:#8a8a8a">#</div>
  <!-- left/right divider -->
  <div class="a" style="left:556px;top:644px;width:1px;height:194px;background:#101010"></div>
  <!-- right: time area -->
  <div class="a" style="left:565px;top:614px;width:1008px;height:9px;background:#6c6c6c;border-top:1px solid #505050"></div>
  <div class="a" style="left:557px;top:614px;width:7px;height:9px;background:#2d8ceb;border-radius:4px 0 0 4px"></div>
  <div class="a" style="left:1574px;top:614px;width:6px;height:9px;background:#2d8ceb;border-radius:0 4px 4px 0"></div>
  <div class="a" style="left:557px;top:624px;width:1024px;height:20px;background:#212121"></div>
  <div class="a" style="left:557px;top:644px;width:1024px;height:1px;background:#0e0e0e"></div>
  <div class="a" style="left:565px;top:645px;width:1008px;height:16px;background:#666"></div>
  <div class="a" style="left:558px;top:645px;width:6px;height:16px;background:#2d8ceb;border-radius:3px 0 0 3px"></div>
  <div class="a" style="left:1572px;top:645px;width:6px;height:16px;background:#2d8ceb;border-radius:0 3px 3px 0"></div>
  <div class="a" style="left:557px;top:661px;width:1024px;height:1px;background:#0c0c0c"></div>
  <div class="a" style="left:565px;top:662px;width:1008px;height:3px;background:#0fbd1c;border-bottom:1px solid #0c9a16"></div>
  <div class="a" style="left:557px;top:665px;width:1016px;height:173px;background:#313131"></div>
  <div class="a" style="left:1573px;top:662px;width:8px;height:176px;background:#2b2b2b"></div>
  <div class="a" style="left:1580px;top:645px;width:1px;height:38px;background:#101010"></div>
  <svg style="left:0;top:0;z-index:3" width="1600" height="858" viewBox="0 0 1600 858" fill="none"><path d="M565 640v5M632 640v5M699 640v5M767 640v5M834 640v5M901 640v5M968 640v5M1035 640v5M1103 640v5M1170 640v5M1237 640v5M1304 640v5M1371 640v5M1439 640v5M1506 640v5M1573 640v5" stroke="#a0a0a0"/>

    <!-- header dividers -->
    <path d="M72 650v11M105.500 650v11M139.500 650v11M275 650v11M417.500 650v11M540.500 650v11" stroke="#191919" stroke-width="1.400"/>
    <!-- eye -->
    <path d="M7.400 655.500q5.500-5.800 11 0q-5.500 5.800-11 0z" fill="#b4b4b4"/><circle cx="12.900" cy="655.300" r="2.100" fill="#303030"/><circle cx="12.900" cy="655.300" r=".9" fill="#8a8a8a"/>
    <!-- speaker -->
    <path d="M22.300 653h3l3.700-3.300v11.600l-3.700-3.300h-3z" fill="#b4b4b4"/>
    <path d="M30.500 652.600a3.600 3.600 0 0 1 0 5.800M31.300 650.200a6.600 6.600 0 0 1 0 10.600" stroke="#b4b4b4" stroke-width="1.300"/>
    <!-- solo dot -->
    <circle cx="44.200" cy="655.600" r="3.700" fill="#b4b4b4"/>
    <!-- lock -->
    <path d="M55 654.800h10v6h-10z" fill="#b4b4b4"/><path d="M57.200 654.800v-1.600a2.800 2.800 0 0 1 5.600 0v1.600" stroke="#b4b4b4" stroke-width="1.500"/><rect x="59.300" y="656.300" width="1.400" height="2.600" fill="#303030"/>
    <!-- tag -->
    <path d="M86.600 649.800h5.600l6.900 6.800-5.500 5.500-7-7z" fill="#b4b4b4"/><circle cx="89.300" cy="652.500" r="1.200" fill="#303030"/>
    <!-- shy -->
    <path d="M281.800 655.300a4.800 4.800 0 0 1 9.600 0z" fill="#b4b4b4"/><circle cx="284.900" cy="653.300" r="1" fill="#303030"/><circle cx="288.300" cy="653.300" r="1" fill="#303030"/>
    <path d="M286.600 655v5.300M280 658.300h4.300M289 658.300h4.300" stroke="#b4b4b4" stroke-width="1.300"/>
    <!-- star/collapse -->
    <circle cx="302.400" cy="655.600" r="1.900" stroke="#b4b4b4" stroke-width="1.200"/>
    <path d="M302.400 650.400v2.600M302.400 658.200v2.600M297.200 655.600h2.600M305 655.600h2.600M298.700 651.900l1.900 1.900M304.200 657.400l1.900 1.900M306.100 651.900l-1.900 1.900M300.600 657.400l-1.900 1.900" stroke="#b4b4b4" stroke-width="1.100"/>
    <!-- quality -->
    <path d="M313 650.600l10 9.600" stroke="#b4b4b4" stroke-width="1.700" stroke-dasharray="1.500 1.300"/>
    <!-- film -->
    <path d="M343.500 660.500v-9M343.500 660.800h9" stroke="#8c8c8c" stroke-width="1.300"/>
    <rect x="345" y="649.600" width="10.300" height="10" fill="#b4b4b4"/>
    <path d="M346.400 651v7.500M353.900 651v7.500" stroke="#303030" stroke-width=".9" stroke-dasharray="1.100 1.100"/><path d="M348.300 654.600h3.700" stroke="#505050" stroke-width="1.400"/>
    <!-- motion blur blobs -->
    <circle cx="362.500" cy="658.300" r="3.600" stroke="#b4b4b4" stroke-width="1.100"/><circle cx="364.500" cy="656.300" r="3.800" stroke="#b4b4b4" stroke-width="1.100" fill="#303030"/><circle cx="367.300" cy="653.700" r="4.100" fill="#7a7a7a" stroke="#b4b4b4" stroke-width="1.100"/>
    <!-- adjustment -->
    <circle cx="381" cy="655.600" r="4.700" stroke="#b4b4b4" stroke-width="1.200"/><path d="M377.700 659a4.700 4.700 0 0 0 6.600-6.600z" fill="#b4b4b4"/>
    <!-- 3d cube -->
    <path d="M396 650.300l5.400 2.600v6l-5.400 2.700-5.400-2.700v-6zM390.600 652.900l5.400 2.700 5.400-2.700M396 655.600v6" stroke="#b4b4b4" stroke-width="1.200"/>
    <!-- upper row: comp mini-flowchart -->
    <path d="M363 622h5.500M368.500 622h6.500M371 622v8h4" stroke="#b4b4b4" stroke-width="1.200"/>
    <rect x="364.800" y="620.500" width="4" height="3" rx="1" fill="#b4b4b4"/><rect x="374.500" y="620.500" width="4.500" height="3" rx="1" fill="#b4b4b4"/><rect x="374.500" y="628.500" width="4.500" height="3" rx="1" fill="#b4b4b4"/>
    <path d="M375.600 631.600h4.400l-2.200 2.100z" fill="#b4b4b4"/>
    <!-- draft 3d -->
    <path d="M401.500 617.300v8.400M397.300 621.500h8.400M398.500 618.500l6 6M404.500 618.500l-6 6" stroke="#b4b4b4" stroke-width="1.100"/>
    <path d="M408.500 622.600l5.300 2.600v5.200l-5.300 2.600-5.300-2.600v-5.200zM403.200 625.200l5.300 2.600 5.300-2.600M408.500 627.800v5.200" stroke="#b4b4b4" stroke-width="1.200" fill="#232323"/>
    <!-- shy master -->
    <rect x="433.500" y="626.500" width="16.500" height="5.500" fill="#7a7a7a"/>
    <path d="M437.200 624.800a4.600 4.600 0 0 1 9.200 0z" fill="#b4b4b4"/><path d="M441.800 620.500v10M434.500 625.800h14.500" stroke="#b4b4b4" stroke-width="1.400"/>
    <!-- frame blending master -->
    <path d="M462 622v10.500h9" stroke="#b4b4b4" stroke-width="1.300"/><path d="M464 630.600h8" stroke="#8c8c8c" stroke-width="1.200"/>
    <rect x="465.500" y="618.300" width="10.500" height="11" fill="#b4b4b4"/>
    <path d="M466.800 619.500v9M474.700 619.500v9" stroke="#232323" stroke-width=".9" stroke-dasharray="1.100 1.100"/><path d="M468.500 623.800h4.600" stroke="#6a6a6a" stroke-width="1.300"/>
    <!-- motion blur master -->
    <circle cx="493.200" cy="628.300" r="4" stroke="#b4b4b4" stroke-width="1.200"/><circle cx="495.300" cy="626.200" r="4.200" stroke="#b4b4b4" stroke-width="1.200" fill="#232323"/><circle cx="498.300" cy="623.500" r="4.600" fill="#7a7a7a" stroke="#b4b4b4" stroke-width="1.200"/>
    <!-- graph editor -->
    <rect x="524.500" y="620.500" width="14" height="12" rx="1" stroke="#b4b4b4" stroke-width="1.300"/>
    <path d="M526.500 623c5 0 5 7 10.500 7" stroke="#b4b4b4" stroke-width="1.200"/>
    <path d="M527.500 618.300v2M530.800 618.300v2M534.100 618.300v2M537.400 618.300v2M522.600 623.500h2M522.600 626.500h2M522.600 629.500h2" stroke="#b4b4b4" stroke-width="1"/>
    <!-- bottom bar icons -->
    <rect x="5.500" y="840.500" width="17" height="15" fill="#262626" stroke="#2c2c2c"/>
    <rect x="8.600" y="842.600" width="6" height="6" rx="1.300" stroke="#2d8ceb" stroke-width="1.200"/><rect x="10.800" y="844.800" width="6" height="6" rx="1.300" stroke="#2d8ceb" stroke-width="1.200" fill="#262626"/><rect x="13.200" y="847.200" width="6.300" height="6.300" rx="1" stroke="#2d8ceb" stroke-width="1.200" fill="#1d3550"/><rect x="15.600" y="849.600" width="1.600" height="1.600" fill="#2d8ceb"/>
    <circle cx="31" cy="846" r="3.500" stroke="#b4b4b4" stroke-width="1.200"/><rect x="31.500" y="847" width="6.300" height="5.800" rx=".5" stroke="#b4b4b4" stroke-width="1.200" fill="#232323"/>
    <rect x="49.500" y="842.500" width="5" height="10.500" fill="#787878"/>
    <path d="M51 842.300h-2v3.700l-2.300 1.800 2.300 1.800v3.700h2M53 842.300h2v3.700l2.300 1.800-2.300 1.800v3.700h-2" stroke="#c0c0c0" stroke-width="1.300"/>
    <path d="M563 849.500l2.800-3.500 2 2 1.600-2.600 3.600 4.100z" fill="#c8c8c8"/>
    <path d="M594 847.500h40" stroke="#3c3c3c" stroke-width="1.400"/><circle cx="589.300" cy="848.800" r="4.300" stroke="#a8a8a8" stroke-width="1.500" fill="#2a2a2a"/>
    <path d="M647 851l4-6h1.800l-3.200 6zM651.500 851l6-7.500 6.500 7.500z" fill="#c8c8c8"/>
    <path d="M559.300 629h11.200v7l-5.600 6.500-5.600-6.500z" fill="#2d8ceb"/>
    <path d="M564.800 642V838" stroke="#2d8ceb" stroke-width="1.500"/><path d="M564.800 636v6" stroke="#7a6a5a" stroke-width="1"/>
    <path d="M1584 647h12v9l-6 5.500-6-5.500z" fill="#b4b4b4"/>
    <path d="M1589.500 669l-7 6 4 2M1589 672h7v6h-5" stroke="#c0c0c0" stroke-width="1.200"/><circle cx="1588" cy="677.500" r="2.300" stroke="#c0c0c0" stroke-width="1.200"/>
    <path d="M1589.500 672.500h6.500v5.500h-5z" fill="#b4b4b4"/>
  </svg>
  <div class="t rl" style="left:564.0px">00s</div><div class="t rl" style="left:622.7px">02s</div><div class="t rl" style="left:689.9px">04s</div><div class="t rl" style="left:757.1px">06s</div><div class="t rl" style="left:824.3px">08s</div><div class="t rl" style="left:891.5px">10s</div><div class="t rl" style="left:958.7px">12s</div><div class="t rl" style="left:1025.9px">14s</div><div class="t rl" style="left:1093.1px">16s</div><div class="t rl" style="left:1160.3px">18s</div><div class="t rl" style="left:1227.5px">20s</div><div class="t rl" style="left:1294.7px">22s</div><div class="t rl" style="left:1361.9px">24s</div><div class="t rl" style="left:1429.1px">26s</div><div class="t rl" style="left:1496.3px">28s</div><div class="t rl" style="left:1563.5px">30s</div>
  <!-- bottom bar -->
  <div class="a" style="left:2px;top:838px;width:667px;height:1px;background:#0c0c0c"></div>
  <div class="a" style="left:669px;top:838px;width:930px;height:18px;background:#262626"></div>
  <div class="a" style="left:278px;top:840px;width:139px;height:15px;background:#1f1f1f;border:1px solid #2b2b2b;border-radius:2px"></div>
  <div class="t" style="left:309px;top:842px;font-size:12px;color:#8e8e8e;letter-spacing:.2px">切换开关/模式</div>
</div>
</div>
</body></html>
